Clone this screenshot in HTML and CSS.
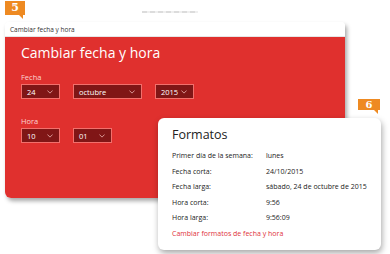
FILE: index.html
```html
<!DOCTYPE html>
<html lang="es">
<head>
<meta charset="utf-8">
<link rel="stylesheet" href="styles.css">
</head>
<body>
<div class="stage">
  <div class="ghost"></div>
  <div class="window">
    <div class="titlebar">Cambiar fecha y hora</div>
    <div class="panel">
      <h1 class="heading">Cambiar fecha y hora</h1>
      <div class="label">Fecha</div>
      <div class="row">
        <div class="select w-s"><span>24</span><svg class="chev" viewBox="0 0 8 5"><path d="M0.5 0.5 L4 4 L7.5 0.5"/></svg></div>
        <div class="select w-l"><span>octubre</span><svg class="chev" viewBox="0 0 8 5"><path d="M0.5 0.5 L4 4 L7.5 0.5"/></svg></div>
        <div class="select w-s"><span>2015</span><svg class="chev" viewBox="0 0 8 5"><path d="M0.5 0.5 L4 4 L7.5 0.5"/></svg></div>
      </div>
      <div class="label label-hora">Hora</div>
      <div class="row">
        <div class="select w-s"><span>10</span><svg class="chev" viewBox="0 0 8 5"><path d="M0.5 0.5 L4 4 L7.5 0.5"/></svg></div>
        <div class="select w-s"><span>01</span><svg class="chev" viewBox="0 0 8 5"><path d="M0.5 0.5 L4 4 L7.5 0.5"/></svg></div>
      </div>
    </div>
  </div>

  <div class="card">
    <h2 class="card-title">Formatos</h2>
    <dl class="formats">
      <dt>Primer día de la semana:</dt><dd>lunes</dd>
      <dt>Fecha corta:</dt><dd>24/10/2015</dd>
      <dt>Fecha larga:</dt><dd>sábado, 24 de octubre de 2015</dd>
      <dt>Hora corta:</dt><dd>9:56</dd>
      <dt>Hora larga:</dt><dd>9:56:09</dd>
    </dl>
    <div class="link">Cambiar formatos de fecha y hora</div>
  </div>

  <div class="badge badge-5">5</div>
  <div class="badge badge-6">6</div>
</div>
</body>
</html>
```
FILE: styles.css
```css
* { box-sizing: border-box; }
html, body { margin: 0; padding: 0; background: #ffffff; }
body { font-family: "Open Sans", "Noto Sans", sans-serif; }

.stage {
  position: relative;
  width: 390px;
  height: 254px;
  overflow: hidden;
  padding: 22px 0 0 5px;
}

.ghost {
  position: absolute;
  left: 142px;
  top: 11px;
  width: 56px;
  height: 2px;
  background: repeating-linear-gradient(90deg, #dcdcdc 0 5px, #efefef 5px 8px);
}

.window {
  width: 340px;
  height: 176px;
  border-radius: 4px 4px 6px 6px;
  overflow: hidden;
  box-shadow: 2px 3px 4px rgba(0,0,0,0.35);
  display: flex;
  flex-direction: column;
}

.titlebar {
  height: 15px;
  background: #ffffff;
  font-size: 6.5px;
  line-height: 15px;
  color: #333;
  padding-left: 5px;
  border-bottom: 1px solid #e6e6e6;
}

.panel {
  flex: 1;
  background: #e0302e;
  padding: 7px 15px 0 16px;
}

.heading {
  margin: 0;
  font-size: 14px;
  font-weight: 400;
  color: #ffffff;
  line-height: 18px;
  height: 20px;
}

.label {
  margin-top: 8px;
  font-size: 7.5px;
  line-height: 10px;
  color: #fbd3d0;
}
.label-hora { margin-top: 17px; }

.row {
  display: flex;
  gap: 13px;
  margin-top: 2px;
}

.select {
  height: 15px;
  background: #801616;
  border: 1px solid #f2706c;
  display: flex;
  align-items: center;
  justify-content: space-between;
  padding: 0 6px 0 5px;
  font-size: 7.5px;
  color: #ffffff;
}
.w-s { width: 39px; }
.w-l { width: 69px; }

.chev {
  width: 6px;
  height: 4px;
  fill: none;
  stroke: #f3c0bd;
  stroke-width: 1;
}

.card {
  position: absolute;
  left: 158px;
  top: 118px;
  width: 223px;
  height: 132px;
  background: #ffffff;
  border-radius: 6px;
  box-shadow: 1px 3px 6px rgba(0,0,0,0.35);
  padding: 8px 14px 0 14px;
}

.card-title {
  margin: 0;
  font-size: 12.5px;
  font-weight: 400;
  color: #222;
  line-height: 18px;
}

.formats {
  margin: 4px 0 0 0;
  display: grid;
  grid-template-columns: 94px 1fr;
  row-gap: 0;
  font-size: 7px;
  line-height: 15.6px;
  color: #222;
}
.formats dt, .formats dd { margin: 0; white-space: nowrap; }

.link {
  font-size: 7px;
  line-height: 15.6px;
  color: #e0313a;
}

.badge {
  position: absolute;
  background: #ee8a22;
  color: #ffffff;
  font-family: "DejaVu Serif", "Liberation Serif", serif;
  font-weight: 700;
  font-size: 11px;
  text-align: center;
}
.badge::after {
  content: "";
  position: absolute;
  right: 2px;
  bottom: -4px;
  border-left: 4px solid transparent;
  border-top: 4px solid #ee8a22;
}
.badge-5 {
  left: 5px;
  top: 1px;
  width: 20px;
  height: 14px;
  line-height: 14px;
}
.badge-6 {
  left: 358px;
  top: 99px;
  width: 22px;
  height: 11px;
  line-height: 11px;
  font-size: 10px;
}
```
